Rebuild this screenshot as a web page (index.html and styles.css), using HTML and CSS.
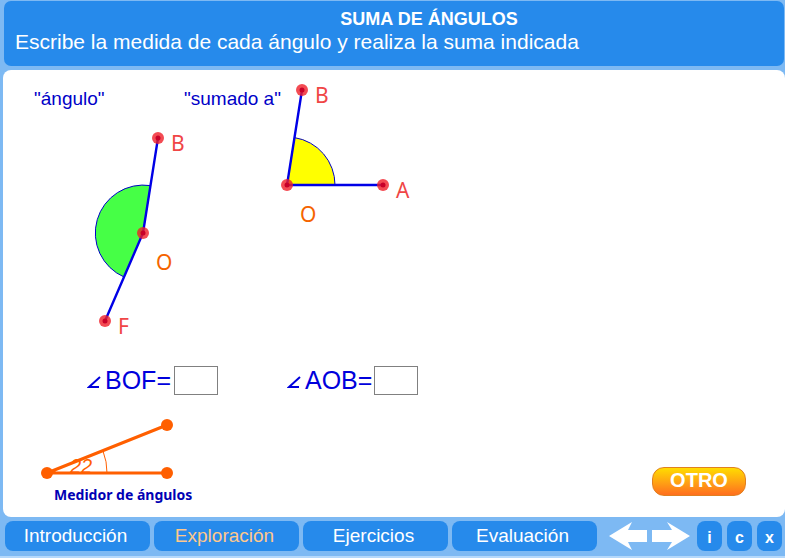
FILE: index.html
```html
<!DOCTYPE html>
<html lang="es">
<head>
<meta charset="utf-8">
<meta name="viewport" content="width=device-width, initial-scale=1">
<title>Suma de ángulos</title>
<link rel="stylesheet" href="styles.css">
</head>
<body>
<header class="header">
  <h1 class="title">SUMA DE ÁNGULOS</h1>
  <p class="instruction">Escribe la medida de cada ángulo y realiza la suma indicada</p>
</header>

<main class="board">
  <svg class="angles" viewBox="3 70 440 280" width="440" height="280">
    <text class="caption" x="34" y="105">"ángulo"</text>
    <text class="caption" x="184" y="105">"sumado a"</text>

    <!-- Angle BOF -->
    <path class="arc arc-green" d="M143 233L150.500 185.600A48 48 0 0 0 124 277Z"/>
    <path class="side" d="M158 138L143 233L105 321"/>
    <g class="vertex"><circle cx="158" cy="138" r="6"/><circle cx="143" cy="233" r="6"/><circle cx="105" cy="321" r="6"/></g>
    <g class="core"><circle cx="158" cy="138" r="2.500"/><circle cx="143" cy="233" r="2.500"/><circle cx="105" cy="321" r="2.500"/></g>
    <text class="point" x="171" y="151">B</text>
    <text class="point origin" x="156" y="270">O</text>
    <text class="point" x="118" y="334">F</text>

    <!-- Angle AOB -->
    <path class="arc arc-yellow" d="M287 185L294.500 137.600A48 48 0 0 1 335 185Z"/>
    <path class="side" d="M302 90L287 185L383 185"/>
    <g class="vertex"><circle cx="302" cy="90" r="6"/><circle cx="287" cy="185" r="6"/><circle cx="383" cy="185" r="6"/></g>
    <g class="core"><circle cx="302" cy="90" r="2.500"/><circle cx="287" cy="185" r="2.500"/><circle cx="383" cy="185" r="2.500"/></g>
    <text class="point" x="315" y="103">B</text>
    <text class="point" x="396" y="198">A</text>
    <text class="point origin" x="300" y="222">O</text>
  </svg>

  <form class="answers">
    <div class="answer">
      <label class="answer-label" for="bof"><svg class="angle-sign" viewBox="0 0 14 14" width="14" height="14"><path d="M13 3L2 13H12"/></svg>BOF=</label>
      <input class="answer-input" id="bof" type="text" inputmode="numeric">
    </div>
    <div class="answer">
      <label class="answer-label" for="aob"><svg class="angle-sign" viewBox="0 0 14 14" width="14" height="14"><path d="M13 3L2 13H12"/></svg>AOB=</label>
      <input class="answer-input" id="aob" type="text" inputmode="numeric">
    </div>
  </form>

  <div class="tools">
    <figure class="meter">
      <svg class="meter-drawing" viewBox="40 418 134 63" width="134" height="63">
        <path class="meter-arc" d="M107 473A60 60 0 0 0 103 451"/>
        <text class="meter-value" x="70" y="473">22</text>
        <path class="meter-side" d="M167 425L47 473H167"/>
        <g class="meter-dot"><circle cx="47" cy="473" r="6"/><circle cx="167" cy="473" r="6"/><circle cx="167" cy="425" r="6"/></g>
      </svg>
      <figcaption class="meter-caption">Medidor de ángulos</figcaption>
    </figure>
    <button class="another" type="button">OTRO</button>
  </div>
</main>

<nav class="nav">
  <div class="tabs">
    <a class="tab" href="#introduccion">Introducción</a>
    <a class="tab tab-current" href="#exploracion" aria-current="page">Exploración</a>
    <a class="tab" href="#ejercicios">Ejercicios</a>
    <a class="tab" href="#evaluacion">Evaluación</a>
  </div>
  <div class="arrows">
    <button class="arrow" type="button" aria-label="Anterior"><svg viewBox="0 0 38 30" width="38" height="30"><path d="M0 15L23 1L19 9H38V21H19L23 29Z"/></svg></button>
    <button class="arrow" type="button" aria-label="Siguiente"><svg viewBox="0 0 38 30" width="38" height="30"><path d="M38 15L15 1L20 9H0V21H20L15 29Z"/></svg></button>
  </div>
  <div class="actions">
    <button class="action" type="button">i</button>
    <button class="action" type="button">c</button>
    <button class="action" type="button">x</button>
  </div>
</nav>
</body>
</html>
```
FILE: styles.css
```css
* {
  box-sizing: border-box;
}

body {
  margin: 0;
  min-height: 100vh;
  display: flex;
  flex-direction: column;
  gap: 4px;
  padding: 1px 0 5px;
  background: #7db9f3;
  border-bottom: 2px solid #b4d8fb;
  font-family: "Liberation Sans", Arial, sans-serif;
}

button,
input {
  font-family: inherit;
  padding: 0;
}

.header {
  margin: 0 1px 0 4px;
  padding: 8px 11px 12px;
  border-radius: 7px;
  background: #268aeb;
  color: #fff;
}

.title {
  margin: 0;
  padding-left: 70px;
  font-size: 18px;
  line-height: 20px;
  text-align: center;
}

.instruction {
  margin: 0;
  font-size: 21px;
  line-height: 25px;
}

.board {
  flex: 1;
  display: flex;
  flex-direction: column;
  margin-left: 3px;
  border-radius: 8px;
  background: #fff;
}

.angles {
  display: block;
}

.caption {
  font-size: 19px;
  fill: #0000c8;
}

.arc {
  stroke: #0000c8;
  stroke-width: 1;
}

.arc-green {
  fill: #46ff46;
}

.arc-yellow {
  fill: #ff0;
}

.side {
  fill: none;
  stroke: #0000e6;
  stroke-width: 2.4;
}

.vertex {
  fill: #f01e28;
  fill-opacity: 0.8;
}

.core {
  fill: #c80028;
}

.point {
  font-family: "Noto Sans", sans-serif;
  font-size: 21px;
  fill: #f04646;
}

.origin {
  fill: #f56400;
}

.answers {
  display: grid;
  grid-template-columns: 200px 200px;
  margin: 16px 0 0 84px;
}

.answer {
  display: grid;
  grid-template-columns: 87px 44px;
  align-items: center;
}

.answer-label {
  display: flex;
  align-items: center;
  gap: 4px;
  font-size: 25px;
  line-height: 29px;
  color: #0000dc;
}

.angle-sign {
  fill: none;
  stroke: #0000dc;
  stroke-width: 2;
}

.answer-input {
  width: 44px;
  height: 29px;
  border: 1px solid #808080;
  border-radius: 0;
  background: #fff;
  font-size: 20px;
  text-align: center;
}

.tools {
  flex: 1;
  display: flex;
  justify-content: space-between;
  align-items: flex-end;
  padding: 0 39px 8px 37px;
}

.meter {
  margin: 0;
}

.meter-drawing {
  display: block;
}

.meter-caption {
  padding-left: 14px;
  font-family: "Noto Sans", sans-serif;
  font-size: 14px;
  font-weight: bold;
  line-height: 28px;
  color: #0000b4;
}

.meter-side {
  fill: none;
  stroke: #ff5f00;
  stroke-width: 3;
}

.meter-dot {
  fill: #ff5f00;
}

.meter-arc {
  fill: none;
  stroke: #ff5f00;
  stroke-width: 1;
}

.meter-value {
  font-size: 20px;
  font-style: italic;
  fill: #ff5f00;
}

.another {
  width: 94px;
  height: 29px;
  margin-bottom: 13px;
  padding-bottom: 3px;
  border: 1px solid #e08020;
  border-radius: 12px;
  background: linear-gradient(#ffdc00, #ffa014 55%, #ff6e1e);
  color: #fff;
  font-size: 20px;
  font-weight: bold;
  line-height: 24px;
}

.nav {
  display: flex;
  align-items: center;
  gap: 7px;
  padding: 0 3px 0 5px;
}

.tabs {
  flex: 1;
  display: grid;
  grid-template-columns: repeat(4, 1fr);
  gap: 4px;
  margin-right: 5px;
}

.tab {
  padding-right: 4px;
  border-radius: 8px;
  background: #268aeb;
  color: #fff;
  font-size: 19px;
  line-height: 30px;
  text-align: center;
  text-decoration: none;
}

.tab-current {
  color: #ffc88c;
}

.arrows {
  display: flex;
  gap: 5px;
}

.arrow {
  display: flex;
  border: 0;
  background: none;
  fill: #fff;
}

.actions {
  display: flex;
  gap: 5px;
}

.action {
  width: 25px;
  height: 30px;
  padding-top: 3px;
  border: 0;
  border-radius: 8px;
  background: #268aeb;
  color: #fff;
  font-size: 16px;
  font-weight: bold;
}
```
